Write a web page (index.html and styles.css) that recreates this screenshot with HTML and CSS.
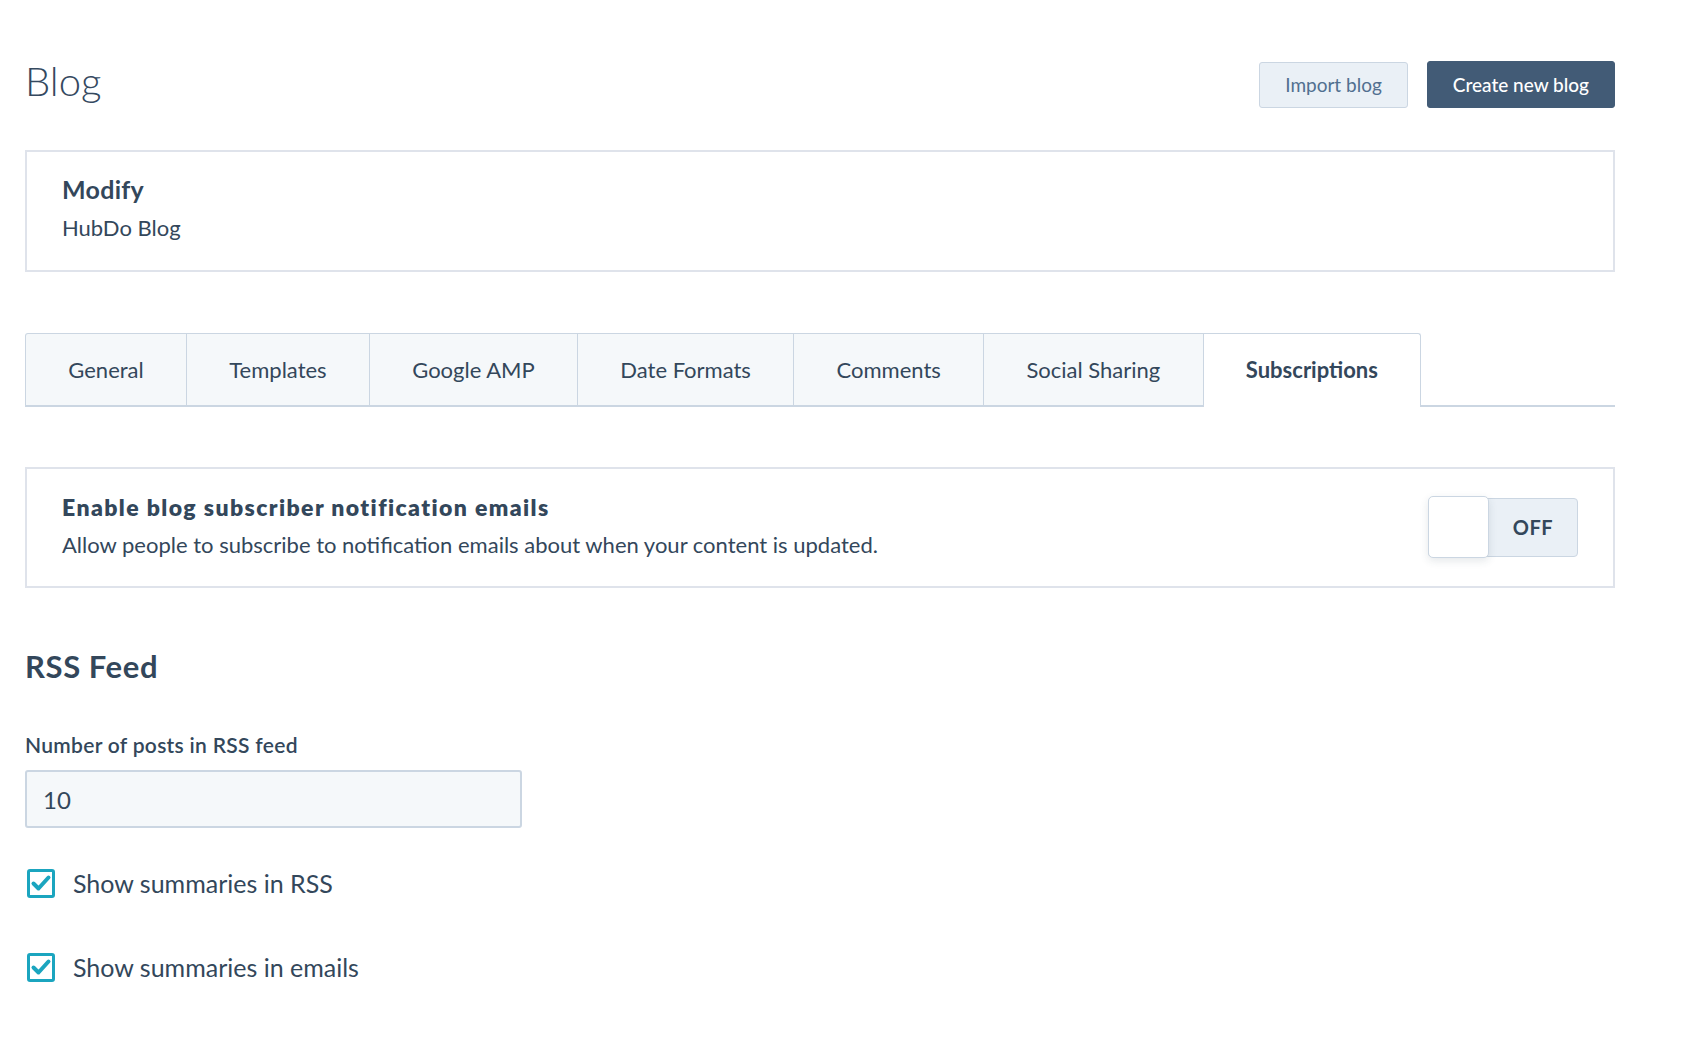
FILE: index.html
```html
<!DOCTYPE html>
<html lang="en">
<head>
<meta charset="utf-8">
<title>Blog settings</title>
<link rel="stylesheet" href="styles.css">
</head>
<body>
<div class="page">
  <header class="header">
    <h1 class="title">Blog</h1>
    <div class="actions">
      <button class="btn btn-secondary">Import blog</button>
      <button class="btn btn-primary">Create new blog</button>
    </div>
  </header>

  <section class="card modify">
    <div class="card-title">Modify</div>
    <div class="card-sub">HubDo Blog</div>
  </section>

  <nav class="tabs">
    <div class="tab">General</div>
    <div class="tab">Templates</div>
    <div class="tab">Google AMP</div>
    <div class="tab">Date Formats</div>
    <div class="tab">Comments</div>
    <div class="tab">Social Sharing</div>
    <div class="tab active">Subscriptions</div>
  </nav>

  <section class="card toggle-card">
    <div class="toggle-text">
      <div class="toggle-title">Enable blog subscriber notification emails</div>
      <div class="toggle-desc">Allow people to subscribe to notification emails about when your content is updated.</div>
    </div>
    <div class="toggle">
      <span class="knob"></span>
      <span class="toggle-label">OFF</span>
    </div>
  </section>

  <h2 class="section-title">RSS Feed</h2>

  <div class="field">
    <div class="field-label">Number of posts in RSS feed</div>
    <div class="input">10</div>
  </div>

  <div class="check">
    <span class="box"><svg viewBox="0 0 28 29" width="28" height="29"><path d="M6.5 14.5 L11.5 19.5 L21.5 8.5" fill="none" stroke="#1ba5bf" stroke-width="4" stroke-linecap="round" stroke-linejoin="round"/></svg></span>
    <span class="check-label">Show summaries in RSS</span>
  </div>
  <div class="check">
    <span class="box"><svg viewBox="0 0 28 29" width="28" height="29"><path d="M6.5 14.5 L11.5 19.5 L21.5 8.5" fill="none" stroke="#1ba5bf" stroke-width="4" stroke-linecap="round" stroke-linejoin="round"/></svg></span>
    <span class="check-label">Show summaries in emails</span>
  </div>
</div>
</body>
</html>
```

FILE: styles.css
```css
* { box-sizing: border-box; }
html, body { margin: 0; padding: 0; background: #fff; }
body {
  font-family: "Lato", "Open Sans", sans-serif;
  color: #33475b;
}
.page {
  width: 1590px;
  margin-left: 25px;
  padding-top: 61px;
}

/* header */
.header {
  display: flex;
  align-items: center;
  justify-content: space-between;
  height: 47px;
}
.title {
  margin: 0 0 8px;
  font-size: 40px;
  font-weight: 300;
  line-height: 1;
  color: #35495f;
}
.actions { display: flex; gap: 19px; align-items: center; }
.btn {
  font-family: inherit;
  font-size: 19px;
  border-radius: 3px;
  padding: 0 25px;
  cursor: pointer;
}
.btn-secondary {
  height: 46px;
  background: #eaf0f6;
  border: 1px solid #cbd6e2;
  color: #516f90;
}
.btn-primary {
  height: 47px;
  background: #425b76;
  border: 1px solid #425b76;
  color: #fff;
  font-weight: 500;
}

/* cards */
.card {
  border: 2px solid #dfe3eb;
  background: #fff;
}
.modify {
  margin-top: 42px;
  padding: 22px 35px 29px;
}
.card-title {
  font-size: 25px;
  font-weight: 700;
  letter-spacing: 0.3px;
  line-height: 30px;
}
.card-sub {
  margin-top: 10px;
  font-size: 22px;
  line-height: 27px;
}

/* tabs */
.tabs {
  display: flex;
  align-items: flex-end;
  margin-top: 61px;
  border-bottom: 2px solid #cbd6e2;
}
.tab {
  height: 72px;
  padding: 0 42.3px;
  display: flex;
  align-items: center;
  font-size: 22px;
  background: #f5f8fa;
  border-top: 1px solid #cbd6e2;
  border-right: 1px solid #cbd6e2;
  white-space: nowrap;
}
.tab:first-child {
  border-left: 1px solid #cbd6e2;
  border-top-left-radius: 3px;
}
.tab.active {
  height: 74px;
  margin-bottom: -2px;
  padding-bottom: 2px;
  background: #fff;
  font-weight: 700;
  border-top-right-radius: 3px;
}

/* toggle card */
.toggle-card {
  margin-top: 60px;
  padding: 24px 35px 28px;
  display: flex;
  align-items: center;
  justify-content: space-between;
}
.toggle-title {
  font-size: 23px;
  font-weight: 800;
  letter-spacing: 1.4px;
  line-height: 28px;
}
.toggle-desc {
  margin-top: 10px;
  font-size: 22px;
  line-height: 27px;
}
.toggle {
  display: flex;
  align-items: center;
  width: 150px;
  height: 59px;
  margin-top: 3px;
  background: #eaf0f6;
  border: 1px solid #cbd6e2;
  border-radius: 4px;
}
.knob {
  width: 61px;
  height: 62px;
  margin-left: -1px;
  background: #fff;
  border: 1px solid #cbd6e2;
  border-radius: 5px;
  box-shadow: 0 3px 8px rgba(45, 62, 80, 0.12);
}
.toggle-label {
  flex: 1;
  text-align: center;
  font-size: 20px;
  font-weight: 700;
  letter-spacing: 0.5px;
}

/* rss */
.section-title {
  margin: 60px 0 0;
  font-size: 31px;
  font-weight: 700;
  letter-spacing: 0.6px;
  line-height: 37px;
}
.field { margin-top: 47px; }
.field-label {
  font-size: 21px;
  font-weight: 600;
  letter-spacing: 0.3px;
  line-height: 25px;
}
.input {
  margin-top: 13px;
  width: 497px;
  height: 58px;
  padding: 0 16px;
  display: flex;
  align-items: center;
  font-size: 24px;
  background: #f5f8fa;
  border: 2px solid #cbd6e2;
  border-radius: 3px;
}
.check {
  display: flex;
  align-items: center;
  gap: 18px;
  margin-top: 40px;
  margin-left: 2px;
}
.check + .check { margin-top: 54px; }
.box {
  width: 28px;
  height: 29px;
  border: 3px solid #1ba5bf;
  border-radius: 3px;
  position: relative;
  flex: none;
}
.box svg {
  position: absolute;
  left: -3px;
  top: -3px;
}
.check-label {
  font-size: 25px;
  line-height: 30px;
}
```
